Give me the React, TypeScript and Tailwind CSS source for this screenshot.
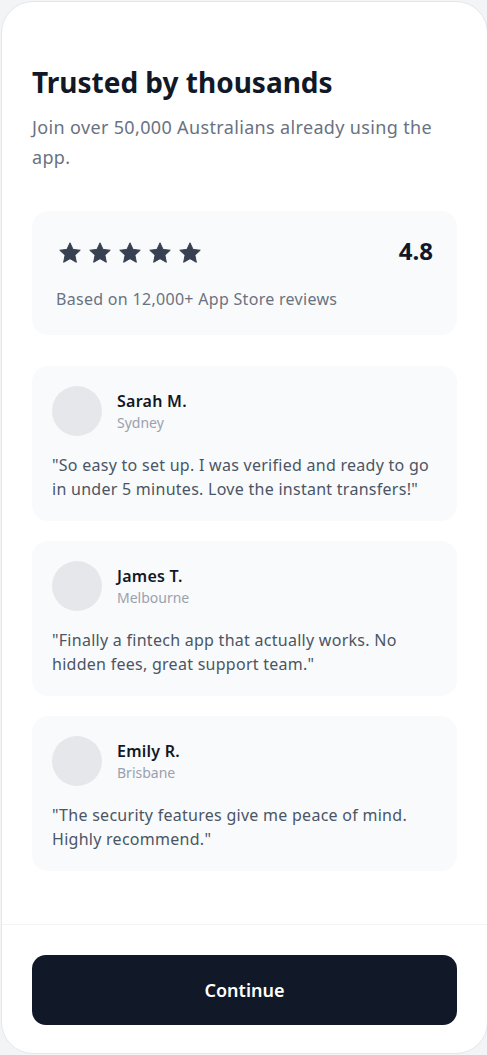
import React from "react";

function StarIcon() {
  return (
    <svg viewBox="0 0 24 24" className="h-6 w-6" fill="#374151">
      <path d="M12 1.8l3.05 6.6 7.2.85-5.33 4.93 1.43 7.12L12 17.7l-6.35 3.6 1.43-7.12L1.75 9.25l7.2-.85z" strokeLinejoin="round" stroke="#374151" strokeWidth="1" />
    </svg>
  );
}

const reviews = [
  { name: "Sarah M.", city: "Sydney", quote: '"So easy to set up. I was verified and ready to go in under 5 minutes. Love the instant transfers!"' },
  { name: "James T.", city: "Melbourne", quote: '"Finally a fintech app that actually works. No hidden fees, great support team."' },
  { name: "Emily R.", city: "Brisbane", quote: '"The security features give me peace of mind. Highly recommend."' },
];

export default function App() {
  return (
    <div className="h-screen overflow-hidden bg-[#f3f4f6] pl-px pt-px" style={{ fontFamily: '"Noto Sans", "Open Sans", sans-serif' }}>
      <div className="flex h-[1053px] w-[487px] flex-col rounded-[32px] border border-gray-200 bg-white">
        <div className="flex-1 px-[30px] pt-[62px]">
          <h1 className="text-[28px] font-bold leading-9 text-[#111827]">Trusted by thousands</h1>
          <p className="mt-3 text-lg leading-[30px] tracking-[0.35px] text-gray-500">Join over 50,000 Australians already using the app.</p>

          <div className="mt-[39px] rounded-2xl bg-[#f9fafb] p-6">
            <div className="flex h-8 items-center justify-between">
              <div className="ml-0.5 flex translate-y-[2px] gap-1.5">
                <StarIcon />
                <StarIcon />
                <StarIcon />
                <StarIcon />
                <StarIcon />
              </div>
              <span className="text-2xl font-bold leading-8 text-[#111827]">4.8</span>
            </div>
            <p className="mt-5 text-base leading-6 tracking-[0.3px] text-gray-500">Based on 12,000+ App Store reviews</p>
          </div>

          <div className="mt-[31px] flex flex-col gap-5">
            {reviews.map((r) => (
              <div key={r.name} className="rounded-2xl bg-[#f9fafb] p-5">
                <div className="flex items-center gap-[15px]">
                  <div className="h-[50px] w-[50px] shrink-0 rounded-full bg-gray-200" />
                  <div>
                    <div className="text-base font-semibold leading-6 tracking-[0.25px] text-[#111827]">{r.name}</div>
                    <div className="text-sm leading-5 text-gray-400">{r.city}</div>
                  </div>
                </div>
                <p className="mt-[17px] text-base leading-6 tracking-[0.27px] text-gray-600">{r.quote}</p>
              </div>
            ))}
          </div>
        </div>
        <div className="border-t border-gray-100 px-[30px] pb-[28px] pt-[30px]">
          <button className="h-[70px] w-full rounded-[14px] bg-[#111827] text-lg font-semibold text-white">Continue</button>
        </div>
      </div>
    </div>
  );
}
